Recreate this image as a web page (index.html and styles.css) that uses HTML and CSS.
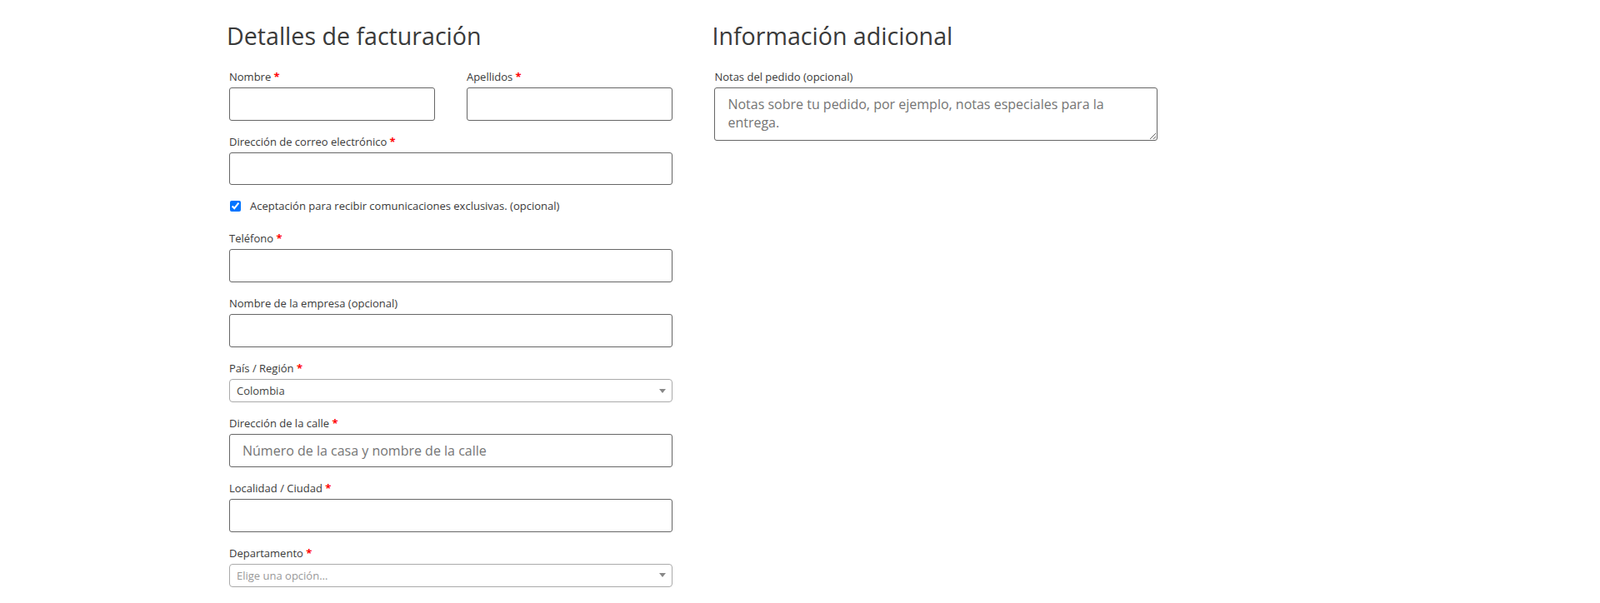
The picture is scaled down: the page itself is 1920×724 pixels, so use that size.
FILE: index.html
```html
<!DOCTYPE html>
<html lang="es">

<head>
  <meta charset="UTF-8">
  <meta name="viewport" content="width=device-width, initial-scale=1.0">
  <title>Finalizar compra</title>
  <link rel="stylesheet" href="styles.css">
</head>

<body>
  <form class="checkout">
    <div class="col col-billing">
      <h3>Detalles de facturación</h3>

      <div class="field-pair">
        <p class="form-row">
          <label for="billing_first_name">Nombre <abbr class="required">*</abbr></label>
          <input type="text" class="input-text" id="billing_first_name">
        </p>
        <p class="form-row">
          <label for="billing_last_name">Apellidos <abbr class="required">*</abbr></label>
          <input type="text" class="input-text" id="billing_last_name">
        </p>
      </div>

      <p class="form-row">
        <label for="billing_email">Dirección de correo electrónico <abbr class="required">*</abbr></label>
        <input type="email" class="input-text" id="billing_email">
      </p>

      <p class="form-row form-row-check">
        <label class="checkbox">
          <input type="checkbox" checked>
          <span>Aceptación para recibir comunicaciones exclusivas.&nbsp;(opcional)</span>
        </label>
      </p>

      <p class="form-row">
        <label for="billing_phone">Teléfono <abbr class="required">*</abbr></label>
        <input type="tel" class="input-text" id="billing_phone">
      </p>

      <p class="form-row">
        <label for="billing_company">Nombre de la empresa (opcional)</label>
        <input type="text" class="input-text" id="billing_company">
      </p>

      <p class="form-row">
        <label>País / Región <abbr class="required">*</abbr></label>
        <span class="select-box">
          <span class="select-value">Colombia</span>
          <span class="select-arrow"></span>
        </span>
      </p>

      <p class="form-row">
        <label for="billing_address_1">Dirección de la calle <abbr class="required">*</abbr></label>
        <input type="text" class="input-text" id="billing_address_1" placeholder="Número de la casa y nombre de la calle">
      </p>

      <p class="form-row">
        <label for="billing_city">Localidad / Ciudad <abbr class="required">*</abbr></label>
        <input type="text" class="input-text" id="billing_city">
      </p>

      <p class="form-row">
        <label>Departamento <abbr class="required">*</abbr></label>
        <span class="select-box">
          <span class="select-value placeholder">Elige una opción…</span>
          <span class="select-arrow"></span>
        </span>
      </p>
    </div>

    <div class="col col-additional">
      <h3>Información adicional</h3>
      <p class="form-row">
        <label for="order_comments">Notas del pedido&nbsp;(opcional)</label>
        <textarea id="order_comments" class="input-text notes" placeholder="Notas sobre tu pedido, por ejemplo, notas especiales para la entrega."></textarea>
      </p>
    </div>
  </form>
</body>

</html>
```

FILE: styles.css
```css
:root {
  --text: #3a3a3a;
  --label: #3a3a3a;
  --border: #666666;
  --select-border: #aaaaaa;
  --placeholder: #757575;
  --required: #ff0000;
}

* {
  box-sizing: border-box;
}

body {
  margin: 0;
  background: #ffffff;
  color: var(--text);
  font-family: "Open Sans", "Noto Sans", sans-serif;
}

.checkout {
  display: flex;
  justify-content: space-between;
  width: 1120px;
  margin-left: 272px;
  padding-top: 26px;
}

.col {
  width: 48%;
}

h3 {
  margin: 0 0 16px;
  font-size: 28.6px;
  font-weight: 400;
  line-height: 34px;
  color: var(--text);
}

.field-pair {
  display: flex;
  justify-content: space-between;
}

.field-pair .form-row {
  width: 47%;
}

.form-row {
  margin: 0 0 6px;
  padding: 3px;
}

.form-row label {
  display: block;
  font-size: 13px;
  line-height: 2;
  color: var(--label);
}

.required {
  color: var(--required);
  font-weight: 700;
  text-decoration: none;
  border: 0;
}

.input-text {
  display: block;
  width: 100%;
  height: 39.7px;
  margin: 0;
  padding: 0 15px;
  border: 1px solid var(--border);
  border-radius: 3px;
  background: #ffffff;
  font-family: inherit;
  font-size: 16px;
  color: var(--text);
  outline: none;
}

.input-text::placeholder {
  color: var(--placeholder);
  opacity: 1;
}

.notes {
  height: 64px;
  padding: 8px 15px;
  line-height: 22px;
  resize: vertical;
}

/* checkbox row */
.form-row .checkbox {
  display: flex;
  align-items: center;
  gap: 11px;
  line-height: 27px;
}

.checkbox input {
  width: 13px;
  height: 13px;
  margin: 0 0 0 1px;
}

/* select2-like dropdown */
.select-box {
  display: flex;
  align-items: center;
  justify-content: space-between;
  height: 28.5px;
  padding: 0 0 0 8px;
  border: 1px solid var(--select-border);
  border-radius: 4px;
  background: #ffffff;
  font-size: 13px;
  color: #444444;
}

.select-value.placeholder {
  color: #999999;
}

.select-arrow {
  width: 20px;
  height: 26px;
  margin-right: 1px;
  display: flex;
  align-items: center;
  justify-content: center;
}

.select-arrow::after {
  content: '';
  border-style: solid;
  border-color: #888888 transparent transparent transparent;
  border-width: 5px 4px 0 4px;
}
```
